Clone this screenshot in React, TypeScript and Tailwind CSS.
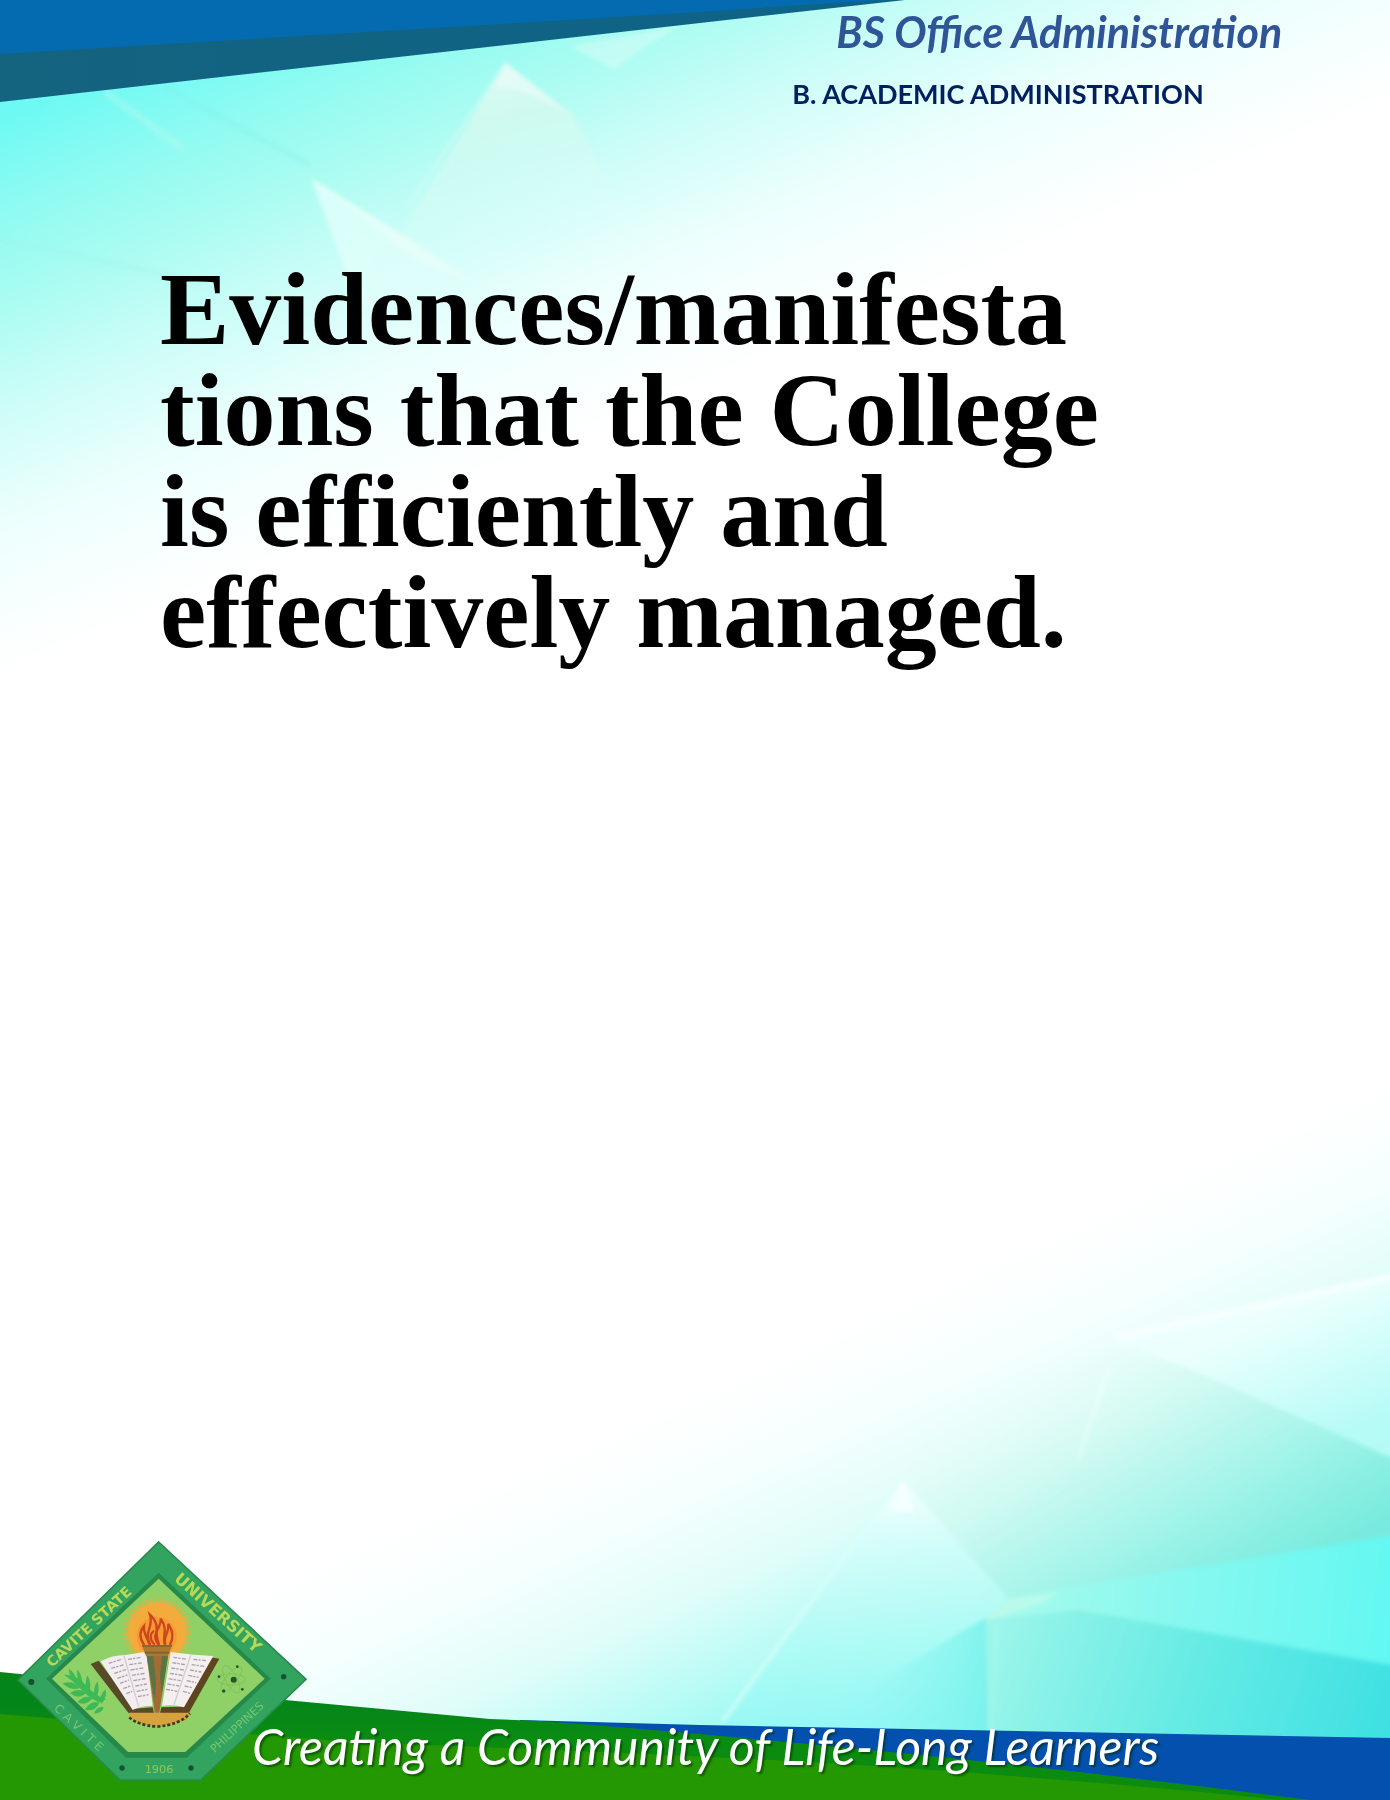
function Backdrop() {
  return (
    <svg
      className="absolute inset-0 h-full w-full"
      viewBox="0 0 1390 1800"
      preserveAspectRatio="none"
      aria-hidden="true"
    >
      <defs>
        <linearGradient id="glowTop" gradientUnits="userSpaceOnUse" x1="0" y1="0" x2="240" y2="580">
          <stop offset="0.18" stopColor="#6ff9f4" />
          <stop offset="0.32" stopColor="#90fbf1" />
          <stop offset="0.46" stopColor="#acfcf2" />
          <stop offset="0.6" stopColor="#ccfdf8" />
          <stop offset="0.78" stopColor="#edfffd" />
          <stop offset="1" stopColor="#ffffff" />
        </linearGradient>
        <linearGradient id="glowBottom" gradientUnits="userSpaceOnUse" x1="700" y1="1390" x2="854" y2="1732">
          <stop offset="0" stopColor="#ffffff" />
          <stop offset="0.25" stopColor="#f5fffe" />
          <stop offset="0.5" stopColor="#dffdf9" />
          <stop offset="0.75" stopColor="#b4fbf5" />
          <stop offset="1" stopColor="#86f6f2" />
        </linearGradient>
        <linearGradient id="facetGreen" gradientUnits="userSpaceOnUse" x1="1030" y1="1350" x2="1190" y2="1630">
          <stop offset="0" stopColor="#f2fffc" stopOpacity="0" />
          <stop offset="0.35" stopColor="#d0f9f1" stopOpacity="0.85" />
          <stop offset="0.75" stopColor="#98f2e6" />
          <stop offset="1" stopColor="#78ebde" />
        </linearGradient>
        <linearGradient id="facetAqua" gradientUnits="userSpaceOnUse" x1="1000" y1="1600" x2="1390" y2="1640">
          <stop offset="0" stopColor="#a8faec" />
          <stop offset="0.5" stopColor="#84f8f0" />
          <stop offset="1" stopColor="#62f8f2" />
        </linearGradient>
        <linearGradient id="facetTeal" gradientUnits="userSpaceOnUse" x1="990" y1="1600" x2="1390" y2="1740">
          <stop offset="0" stopColor="#a0f6ea" />
          <stop offset="0.5" stopColor="#66ebe4" />
          <stop offset="1" stopColor="#3de0e3" />
        </linearGradient>
        <linearGradient id="facetPeak" gradientUnits="userSpaceOnUse" x1="900" y1="1480" x2="930" y2="1720">
          <stop offset="0" stopColor="#f4ffff" />
          <stop offset="0.3" stopColor="#cffdf9" />
          <stop offset="0.65" stopColor="#aefbf5" />
          <stop offset="1" stopColor="#92f7f5" />
        </linearGradient>
        <linearGradient id="facetLow" gradientUnits="userSpaceOnUse" x1="850" y1="1670" x2="990" y2="1690">
          <stop offset="0" stopColor="#92f8f3" stopOpacity="0" />
          <stop offset="1" stopColor="#7bf2eb" />
        </linearGradient>
        <linearGradient id="facetSide" gradientUnits="userSpaceOnUse" x1="1290" y1="1310" x2="1340" y2="1430">
          <stop offset="0" stopColor="#edfffe" />
          <stop offset="1" stopColor="#bbfcf7" />
        </linearGradient>
        <linearGradient id="shardA" gradientUnits="userSpaceOnUse" x1="500" y1="65" x2="540" y2="240">
          <stop offset="0" stopColor="#dcfbf5" />
          <stop offset="0.3" stopColor="#cef9ef" />
          <stop offset="1" stopColor="#e4fffa" stopOpacity="0" />
        </linearGradient>
        <linearGradient id="shardB" gradientUnits="userSpaceOnUse" x1="315" y1="180" x2="450" y2="300">
          <stop offset="0" stopColor="#dcfdf8" />
          <stop offset="0.5" stopColor="#e2fffa" stopOpacity="0.7" />
          <stop offset="1" stopColor="#f4fffe" stopOpacity="0" />
        </linearGradient>
        <linearGradient id="bandDark" x1="0" y1="0" x2="1" y2="0">
          <stop offset="0" stopColor="#14637f" />
          <stop offset="1" stopColor="#0d6388" />
        </linearGradient>
        <linearGradient id="footGreen" gradientUnits="userSpaceOnUse" x1="0" y1="1700" x2="0" y2="1745">
          <stop offset="0" stopColor="#04851a" />
          <stop offset="1" stopColor="#0b8c10" />
        </linearGradient>
        <filter id="soft" x="-10%" y="-10%" width="120%" height="120%">
          <feGaussianBlur stdDeviation="2" />
        </filter>
      </defs>

      <rect width="1390" height="1800" fill="#ffffff" />
      <rect width="1390" height="900" fill="url(#glowTop)" />
      <rect y="900" width="1390" height="900" fill="url(#glowBottom)" />

      <g filter="url(#soft)">
        <path d="M506 63 L575 117 L640 240 L390 250 Z" fill="url(#shardA)" />
        <path d="M506 63 L408 205" stroke="#dcfcf7" strokeWidth="3" opacity="0.6" />
        <path d="M506 63 L575 117 L525 92 L494 86 Z" fill="#effbf7" opacity="0.5" />
        <path d="M311 178 L490 288 L360 310 Z" fill="url(#shardB)" />
        <path d="M311 178 L480 285 L420 262 Z" fill="#effdfa" opacity="0.5" />
        <path d="M105 92 L185 150" stroke="#b5fbf3" strokeWidth="8" opacity="0.4" />
        <path d="M165 88 L310 165" stroke="#84eee6" strokeWidth="5" opacity="0.3" />
        <path d="M570 46 L680 26 L640 50 L615 70 Z" fill="#e9fcf7" opacity="0.4" />
        <path d="M0 240 L200 282" stroke="#9cf3ec" strokeWidth="5" opacity="0.3" />

        <path d="M1114 1338 L1410 1271 L1410 1466 L1180 1365 Z" fill="url(#facetSide)" opacity="0.8" />
        <path d="M1114 1338 L1410 1272" stroke="#ffffff" strokeWidth="8" opacity="0.5" />
        <path d="M902 1479 L970 1390 L1114 1345 L1180 1365 L1410 1466 L1410 1540 L1008 1600 Z" fill="url(#facetGreen)" />
        <path d="M1110 1365 L1078 1460" stroke="#f2fffc" strokeWidth="5" opacity="0.4" />
        <path d="M902 1479 L1008 1598 L1000 1730 L720 1730 Z" fill="url(#facetPeak)" />
        <path d="M902 1479 L915 1512 L890 1512 Z" fill="#ffffff" opacity="0.5" />
        <path d="M902 1479 L722 1722" stroke="#dcfff9" strokeWidth="4" opacity="0.6" />
        <path d="M990 1615 L830 1710 L830 1740 L1000 1740 Z" fill="url(#facetLow)" />
        <path d="M986 1620 L1008 1597 L1410 1533 L1410 1760 L988 1760 Z" fill="url(#facetTeal)" />
        <path d="M986 1620 L1008 1597 L1410 1533 L1410 1668 L1078 1610 Z" fill="url(#facetAqua)" />
        <path d="M984 1621 L1008 1599 L1060 1592 L1040 1604 Z" fill="#c4f9ea" opacity="0.7" />
        <path d="M998 1623 L990 1730" stroke="#a6f8ec" strokeWidth="5" opacity="0.5" />
      </g>

      <path d="M0 0 H905 L700 23 L0 102 Z" fill="url(#bandDark)" />
      <path d="M0 0 H880 L700 12 L0 54 Z" fill="#046bb0" />

      <path d="M520 1720 L700 1725 L1390 1738 V1800 H520 Z" fill="#0450ae" />
      <path d="M0 1672 L40 1676 L285 1700 L490 1719 L540 1721 Q700 1733 900 1753 T1310 1800 H0 Z" fill="url(#footGreen)" />
      <path d="M0 1714 L120 1724 L340 1741 L600 1752 Q820 1761 1000 1775 T1280 1800 H0 Z" fill="#239803" />
    </svg>
  );
}

function Seal() {
  return (
    <svg
      className="h-[242px] w-[292px] shrink-0"
      viewBox="48 60 876 726"
      role="img"
      aria-label="Cavite State University seal"
    >
      <path d="M476 66 L918 478 L602 780 H360 L54 480 Z" fill="#33a45f" stroke="#288b4c" strokeWidth="5" />
      <path d="M476 158 L812 476 L560 713 H378 L138 476 Z" fill="#26894a" />
      <path d="M476 176 L794 476 L556 696 H384 L156 476 Z" fill="#8fd166" />

      <g fill="#b9d957" fontFamily="DejaVu Sans" fontWeight="700">
        <text transform="translate(156 444) rotate(-43)" fontSize="43">CAVITE STATE</text>
        <text transform="translate(520 180) rotate(42)" fontSize="49">UNIVERSITY</text>
      </g>
      <g fill="#77c772" fontFamily="DejaVu Sans">
        <text transform="translate(160 568) rotate(43)" fontSize="36">C A V I T E</text>
        <text transform="translate(644 700) rotate(-43)" fontSize="34">PHILIPPINES</text>
        <text x="434" y="759" fontSize="34" fill="#8fc855">1906</text>
      </g>
      <g fill="#15502f">
        <circle cx="94" cy="486" r="9" />
        <circle cx="851" cy="470" r="8" />
        <circle cx="366" cy="744" r="8" />
        <circle cx="573" cy="744" r="8" />
      </g>

      <circle cx="472" cy="335" r="94" fill="none" stroke="#d9b348" strokeWidth="14" strokeDasharray="8 7" />
      <circle cx="472" cy="335" r="88" fill="#f3ab3b" />
      <circle cx="470" cy="350" r="60" fill="#f79a35" />
      <g fill="none" stroke="#cb471c" strokeWidth="7" strokeLinecap="round">
        <path d="M432 374 C415 350 422 330 432 318 C430 340 440 350 448 372" />
        <path d="M450 372 C430 338 462 320 450 284 C485 315 460 340 477 372" />
        <path d="M474 372 C450 340 486 325 482 296 C506 330 486 345 494 372" />
        <path d="M496 374 C488 350 508 340 505 312 C524 340 518 360 510 374" />
        <path d="M462 372 C446 355 452 340 460 334" />
      </g>

      <path d="M272 432 L296 422 L404 566 L458 562 L462 580 H386 Z" fill="#584a26" />
      <path d="M658 416 L630 412 L548 560 L484 562 L480 580 H566 Z" fill="#5e4520" />
      <path d="M386 578 H570 L562 598 Q530 616 470 618 Q410 612 390 594 Z" fill="#d6a13f" />
      <path d="M388 592 Q410 614 470 620 Q540 614 570 580" fill="none" stroke="#40391d" strokeWidth="8" strokeDasharray="9 6" />
      <path d="M302 424 Q340 404 372 406 L434 396 L440 404 L458 558 Q424 556 398 570 Z" fill="#f3edf0" />
      <path d="M512 396 L580 404 L640 408 L552 562 Q522 552 486 558 Z" fill="#f5eff0" />
      <path d="M372 408 L416 560 M572 406 L522 554" stroke="#d5cccf" strokeWidth="4" />
      <g stroke="#aaa2ab" strokeWidth="4" strokeDasharray="12 3 7 4">
        <path d="M326 430 L366 418 M334 445 L372 434 M343 460 L378 449 M352 475 L382 465 M360 490 L387 480 M370 506 L392 497 M379 521 L397 514" />
        <path d="M384 418 L424 412 M388 434 L428 428 M392 450 L430 444 M396 466 L434 460 M400 482 L437 476 M406 498 L440 492 M410 514 L442 508 M414 530 L446 524" />
        <path d="M520 412 L560 418 M517 428 L556 434 M514 444 L552 450 M510 460 L547 466 M506 476 L542 482 M502 492 L537 498 M498 508 L532 514" />
        <path d="M580 418 L620 422 M575 434 L613 439 M570 450 L604 456 M565 466 L596 472 M560 482 L588 488 M554 498 L579 504 M549 514 L570 520" />
      </g>
      <path d="M426 376 H516 L504 408 H438 Z" fill="#a97932" />
      <path d="M426 378 H516 M434 398 H508" stroke="#80612b" strokeWidth="5" />
      <path d="M440 408 H504 L478 578 H464 Z" fill="#a36c34" />
      <path d="M440 408 H460 L468 490 L464 540 Z" fill="#587546" />
      <path d="M486 408 H504 L486 520 L480 470 Z" fill="#587546" />

      <g fill="#3dba57">
        <path d="M192 464 Q230 462 262 500 Q292 530 318 538 L300 548 Q260 530 236 500 Q210 476 192 464" />
        <path d="M206 446 Q230 460 228 488 Q208 474 206 446 M232 448 Q250 470 246 500 Q228 480 232 448 M262 466 Q278 490 266 518 Q250 498 262 466 M292 484 Q302 508 288 536 Q274 512 292 484 M316 508 Q324 528 304 552 Q296 528 316 508" />
        <path d="M188 490 Q220 480 240 504 Q210 514 188 490 M210 520 Q236 500 258 520 Q236 540 210 520 M232 546 Q256 522 278 534 Q258 560 232 546 M254 570 Q272 540 298 548 Q286 576 254 570 M282 580 Q292 556 312 562 Q304 582 282 580" />
      </g>

      <g fill="none" stroke="#7fba55" strokeWidth="2">
        <ellipse cx="694" cy="478" rx="46" ry="17" transform="rotate(62 694 478)" />
        <ellipse cx="694" cy="478" rx="46" ry="17" transform="rotate(-52 694 478)" />
        <ellipse cx="694" cy="478" rx="42" ry="17" />
      </g>
      <g fill="#25532a">
        <circle cx="701" cy="479" r="9" />
        <circle cx="712" cy="440" r="4" />
        <circle cx="657" cy="470" r="4" />
        <circle cx="671" cy="513" r="5" />
        <circle cx="727" cy="508" r="4" />
      </g>
    </svg>
  );
}

export default function App() {
  return (
    <div className="relative flex min-h-screen flex-col overflow-hidden bg-white">
      <Backdrop />

      <header className="relative flex flex-col pl-[57%] pr-8">
        <p className="ml-11 whitespace-nowrap font-['Lato'] text-[43px] font-bold italic leading-[64px] text-[#2f5597]">
          BS Office Administration
        </p>
        <p className="whitespace-nowrap font-['Lato'] text-[27px] font-bold leading-[60px] text-[#002060]">
          B. ACADEMIC ADMINISTRATION
        </p>
      </header>

      <main className="relative flex-1 px-40 pt-[134px]">
        <h1 className="font-['Liberation_Serif'] text-[104px] font-bold leading-[101px] text-black">
          Evidences/manifesta
          <br />
          tions that the College
          <br />
          is efficiently and
          <br />
          effectively managed.
        </h1>
      </main>

      <footer className="relative flex items-end pb-[18px] pl-4">
        <Seal />
        <p className="-ml-14 whitespace-nowrap font-['Lato'] text-[50px] font-normal italic leading-[72px] text-white [text-shadow:2px_2px_2px_rgb(0_40_0/0.55)]">
          Creating a Community of Life-Long Learners
        </p>
      </footer>
    </div>
  );
}
